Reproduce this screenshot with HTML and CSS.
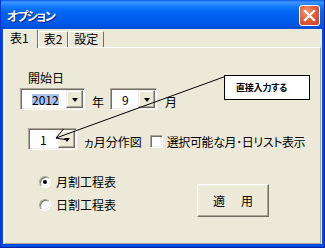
FILE: index.html
```html
<!DOCTYPE html>
<html lang="ja">
<head>
<meta charset="utf-8">
<title>オプション</title>
<link rel="stylesheet" href="styles.css">
</head>
<body>
<div class="window">
  <div class="titlebar">
    <span class="title">オプション</span>
    <span class="close">
      <svg width="19" height="19" viewBox="0 0 19 19"><path d="M5 5 L14 14 M14 5 L5 14" stroke="#fff" stroke-width="2.2" stroke-linecap="square" fill="none"/></svg>
    </span>
  </div>
  <div class="client">
    <div class="tabs">
      <div class="tab active">表1</div>
      <div class="tab">表2</div>
      <div class="tab">設定</div>
    </div>
    <div class="panel">
      <div class="start-label">開始日</div>
      <div class="row row-date">
        <div class="combo combo-year"><span class="value selected">2012</span><span class="drop"><i class="tri"></i></span></div>
        <span class="unit unit-year">年</span>
        <div class="combo combo-month"><span class="value">9</span><span class="drop"><i class="tri"></i></span></div>
        <span class="unit unit-month">月</span>
      </div>
      <div class="row row-span">
        <div class="combo combo-span"><span class="value">1</span><span class="drop"><i class="tri"></i></span></div>
        <span class="unit span-label">ヵ月分作図</span>
        <span class="check"></span>
        <span class="unit check-label">選択可能な月･日リスト表示</span>
      </div>
      <div class="row row-bottom">
        <div class="radios">
          <div class="radio-row"><span class="radio on"></span><span class="radio-label">月割工程表</span></div>
          <div class="radio-row"><span class="radio"></span><span class="radio-label">日割工程表</span></div>
        </div>
        <div class="button">適　用</div>
      </div>
    </div>
  </div>
  <div class="callout">直接入力する</div>
  <svg class="arrow" width="325" height="248" viewBox="0 0 325 248">
    <path d="M224 76.5 L55 138 M62.7 128.8 L55 138 L66.8 140" stroke="#000" stroke-width="1" fill="none"/>
  </svg>
</div>
</body>
</html>
```

FILE: styles.css
```css
html, body {
  margin: 0;
  padding: 0;
}
body {
  width: 325px;
  height: 248px;
  overflow: hidden;
  font-family: "Noto Sans CJK JP", "Noto Sans", sans-serif;
  font-size: 12px;
  color: #000;
  font-feature-settings: "palt";
}
.window {
  position: relative;
  width: 325px;
  height: 248px;
  box-sizing: border-box;
  display: flex;
  flex-direction: column;
  background: #0050e0;
  border-left: 1px solid #0831d9;
  border-right: 1px solid #0021a8;
  border-bottom: 1px solid #0021a8;
}
.titlebar {
  height: 29px;
  flex: none;
  display: flex;
  justify-content: space-between;
  align-items: center;
  padding: 0 4px 0 6px;
  background: linear-gradient(to bottom, #0a5ee6 0%, #3d95ff 8%, #2a8aff 14%, #1079fc 24%, #0068f3 40%, #005fec 60%, #0058e6 80%, #0053e0 92%, #0048d2 100%);
}
.title {
  color: #fff;
  font-weight: bold;
  font-size: 12px;
  line-height: 14px;
  letter-spacing: -1.4px;
  text-shadow: 1px 1px 0 #0a1e8c;
  margin-top: 2px;
}
.close {
  align-self: flex-start;
  margin-top: 5px;
  width: 21px;
  height: 21px;
  box-sizing: border-box;
  border: 1px solid #fff;
  border-radius: 3px;
  background: radial-gradient(circle at 35% 30%, #f09a78 0%, #e2603a 45%, #c8401c 100%);
  display: flex;
  align-items: center;
  justify-content: center;
}
.close svg {
  display: block;
}
.client {
  flex: 1;
  margin: 0 2px 3px 2px;
  background: #ece9d8;
  display: flex;
  flex-direction: column;
}
.tabs {
  height: 18px;
  flex: none;
  display: flex;
  align-items: flex-end;
  padding-left: 1px;
}
.tab {
  box-sizing: border-box;
  height: 16px;
  padding: 0 5px;
  line-height: 14px;
  border-top: 1px solid #fff;
  border-left: 1px solid #fff;
  border-right: 1px solid #716f64;
  border-radius: 2px 2px 0 0;
  background: #ece9d8;
  white-space: nowrap;
}
.tab.active {
  height: 19px;
  margin-bottom: -1px;
  padding: 1px 8px 0 5px;
  position: relative;
  z-index: 1;
}
.panel {
  flex: 1;
  margin: 0 1px 0 1px;
  box-sizing: border-box;
  border-top: 1px solid #fff;
  border-left: 1px solid #fff;
  border-right: 1px solid #aca899;
  border-bottom: 1px solid #aca899;
  padding-top: 23px;
}
.start-label {
  margin-left: 23px;
  line-height: 14px;
}
.row {
  display: flex;
  align-items: center;
  height: 22px;
}
.row-date {
  margin-top: 3px;
}
.row-span {
  margin-top: 18px;
}
.row-bottom {
  margin-top: 20px;
  height: auto;
  align-items: flex-start;
}
.combo {
  box-sizing: border-box;
  height: 22px;
  background: #fff;
  border: 1px solid;
  border-color: #aca899 #fff #fff #aca899;
  box-shadow: inset 1px 1px 0 #716f64, inset -1px -1px 0 #f1efe2;
  display: flex;
  align-items: center;
  padding: 1px;
}
.combo-year {
  margin-left: 15px;
  width: 65px;
}
.combo-month {
  margin-left: 6px;
  width: 47px;
}
.combo-span {
  margin-left: 23px;
  width: 49px;
}
.value {
  margin-left: 10px;
  line-height: 11px;
  height: 11px;
}
.value.selected {
  background: #a9c4ec;
}
.drop {
  margin-left: auto;
  width: 17px;
  height: 18px;
  box-sizing: border-box;
  background: #ece9d8;
  border: 1px solid;
  border-color: #f1efe2 #716f64 #716f64 #f1efe2;
  box-shadow: inset -1px -1px 0 #aca899, inset 1px 1px 0 #fff;
  display: flex;
  align-items: center;
  justify-content: center;
}
.tri {
  display: block;
  width: 0;
  height: 0;
  border-left: 3.5px solid transparent;
  border-right: 3.5px solid transparent;
  border-top: 4px solid #000;
  margin-top: 1px;
}
.unit {
  line-height: 14px;
  padding-top: 5px;
}
.unit-year {
  margin-left: 7px;
}
.unit-month {
  margin-left: 8px;
}
.span-label {
  margin-left: 7px;
}
.check {
  margin-left: 8px;
  margin-top: 4px;
  width: 13px;
  height: 13px;
  box-sizing: border-box;
  background: #fff;
  border: 1px solid;
  border-color: #aca899 #fff #fff #aca899;
  box-shadow: inset 1px 1px 0 #716f64, inset -1px -1px 0 #f1efe2;
}
.check-label {
  margin-left: 4px;
  white-space: nowrap;
  letter-spacing: -0.4px;
}
.radios {
  margin-left: 34px;
  width: 158px;
  display: flex;
  flex-direction: column;
}
.radio-row {
  height: 23px;
  display: flex;
  align-items: center;
}
.radio {
  position: relative;
  width: 12px;
  height: 12px;
  box-sizing: border-box;
  border-radius: 50%;
  background: #fff;
  border: 1px solid;
  border-color: #aca899 #fff #fff #aca899;
  box-shadow: inset 1px 1px 0 #716f64, inset -1px -1px 0 #f1efe2;
}
.radio.on::after {
  content: "";
  position: absolute;
  left: 3px;
  top: 3px;
  width: 4px;
  height: 4px;
  border-radius: 50%;
  background: #000;
}
.radio-label {
  margin-left: 5px;
  line-height: 14px;
}
.button {
  margin-top: 14px;
  width: 72px;
  height: 33px;
  box-sizing: border-box;
  border: 1px solid;
  border-color: #fff #716f64 #716f64 #fff;
  box-shadow: inset -1px -1px 0 #aca899, inset 1px 1px 0 #f1efe2;
  display: flex;
  align-items: center;
  justify-content: center;
  letter-spacing: 2px;
  padding-left: 2px;
  line-height: 14px;
}
.callout {
  position: absolute;
  left: 223px;
  top: 75px;
  width: 86px;
  height: 25px;
  box-sizing: border-box;
  border: 1px solid #000;
  background: #fff;
  font-size: 9px;
  font-weight: bold;
  line-height: 23px;
  padding-left: 11px;
  letter-spacing: -0.2px;
  white-space: nowrap;
}
.arrow {
  position: absolute;
  left: 0;
  top: 0;
  pointer-events: none;
}
```
